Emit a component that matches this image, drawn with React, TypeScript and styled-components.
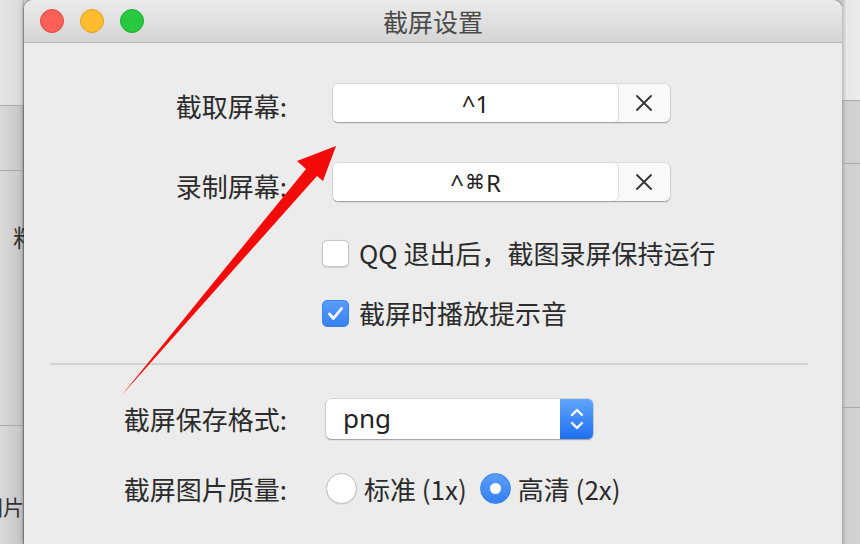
import React from "react";
import styled, { createGlobalStyle } from "styled-components";

const GlobalStyle = createGlobalStyle`
  html, body {
    margin: 0;
    padding: 0;
    background: #d4d4d4;
  }
  body {
    font-family: "Noto Sans CJK SC", "Noto Sans", sans-serif;
  }
`;

const FONT = `"Noto Sans CJK SC", "Noto Sans", sans-serif`;

const Desktop = styled.div`
  position: relative;
  width: 860px;
  height: 544px;
  display: flex;
  overflow: hidden;
`;

const Strip = styled.div<{ $width: number; $head: number; $edge: "left" | "right" }>`
  width: ${(p) => p.$width}px;
  flex: none;
  display: flex;
  flex-direction: column;
  overflow: hidden;
  background: ${(p) =>
    p.$edge === "left"
      ? "linear-gradient(to right, #d9d9d9, #c6c6c6 90%, #9c9c9c)"
      : "linear-gradient(to right, #a8a8a8, #cfcfcf 20%, #d2d2d2)"};

  & > div:first-child {
    height: ${(p) => p.$head}px;
    background: ${(p) =>
      p.$edge === "left"
        ? "linear-gradient(to right, #e6e6e6, #dadada 90%, #b0b0b0)"
        : "linear-gradient(to right, #bdbdbd, #e8e8e8 25%, #ececec)"};
  }
`;

const StripRow = styled.div<{ $h: number; $align?: "left" | "right"; $pad?: number; $ty?: number; $size?: number }>`
  height: ${(p) => p.$h}px;
  flex: none;
  box-sizing: border-box;
  border-top: 1px solid #a9a9a9;
  display: flex;
  justify-content: ${(p) => (p.$align === "right" ? "flex-end" : "flex-start")};
  padding-left: ${(p) => p.$pad ?? 0}px;
  padding-top: ${(p) => p.$ty ?? 0}px;
  font-family: ${FONT};
  font-size: ${(p) => p.$size ?? 24}px;
  line-height: 28px;
  color: #333;
  white-space: nowrap;
`;

const Window = styled.div`
  width: 818px;
  flex: none;
  display: flex;
  flex-direction: column;
  background: #ececec;
  border-radius: 9px 9px 0 0;
  box-shadow: 0 0 0 1px rgba(0, 0, 0, 0.18), 0 0 6px rgba(0, 0, 0, 0.25);
  overflow: hidden;
`;

const TitleBar = styled.div`
  height: 43px;
  flex: none;
  box-sizing: border-box;
  display: flex;
  align-items: center;
  position: relative;
  padding-left: 16px;
  gap: 16px;
  background: linear-gradient(#ebebeb, #d5d5d5);
  border-bottom: 1px solid #b5b5b5;
`;

const Light = styled.span<{ $fill: string; $ring: string }>`
  width: 24px;
  height: 24px;
  border-radius: 50%;
  box-sizing: border-box;
  background: ${(p) => p.$fill};
  border: 1px solid ${(p) => p.$ring};
`;

const Title = styled.div`
  position: absolute;
  left: 0;
  right: 0;
  top: 0;
  bottom: 0;
  display: flex;
  align-items: center;
  justify-content: center;
  font-family: ${FONT};
  font-size: 25px;
  color: #4a4a4a;
  pointer-events: none;
`;

const Body = styled.div`
  display: flex;
  flex-direction: column;
`;

const Row = styled.div<{ $top: number }>`
  display: grid;
  grid-template-columns: 263px 1fr;
  align-items: center;
  margin-top: ${(p) => p.$top}px;
`;

const Label = styled.div<{ $shift?: number }>`
  text-align: right;
  font-family: ${FONT};
  font-size: 26px;
  line-height: 30px;
  color: #2b2b2b;
  padding-top: ${(p) => p.$shift ?? 0}px;
`;

const Control = styled.div<{ $indent: number }>`
  grid-column: 2;
  margin-left: ${(p) => p.$indent}px;
  display: flex;
  align-items: center;
`;

const ShortcutBox = styled.div`
  width: 337px;
  height: 38px;
  display: flex;
  border-radius: 5px;
  background: #f9f9f9;
  box-shadow: 0 0 0 0.5px rgba(0, 0, 0, 0.12), 0 1px 1.5px rgba(0, 0, 0, 0.3);
`;

const ShortcutText = styled.div`
  width: 285px;
  height: 100%;
  display: flex;
  align-items: center;
  justify-content: center;
  background: #fff;
  border-radius: 5px;
  box-shadow: 1px 0 1px rgba(0, 0, 0, 0.12);
  font-family: "Noto Sans", "Noto Sans CJK SC", sans-serif;
  font-size: 24px;
  color: #222;
`;

const CmdGlyph = styled.span`
  font-family: "DejaVu Sans", sans-serif;
  font-size: 20px;
  margin: 0 1px;
`;

const ClearCell = styled.div`
  flex: 1;
  display: flex;
  align-items: center;
  justify-content: center;
`;

const CheckRow = styled.label`
  display: flex;
  align-items: center;
  gap: 10px;
  font-family: ${FONT};
  font-size: 26px;
  line-height: 30px;
  color: #2b2b2b;
`;

const Box = styled.span<{ $on?: boolean }>`
  width: 27px;
  height: 27px;
  box-sizing: border-box;
  border-radius: 5px;
  display: flex;
  align-items: center;
  justify-content: center;
  background: ${(p) => (p.$on ? "linear-gradient(#5a9dfa, #3580f3)" : "#fff")};
  border: 1px solid ${(p) => (p.$on ? "#3a82ee" : "#c4c4c4")};
  box-shadow: ${(p) => (p.$on ? "none" : "0 0.5px 1px rgba(0,0,0,0.12)")};
`;

const Divider = styled.div`
  height: 2px;
  margin: 35px 34px 0 26px;
  background: #d2d2d2;
`;

const Select = styled.div`
  width: 267px;
  height: 40px;
  display: flex;
  border-radius: 5px;
  background: #fff;
  box-shadow: 0 0 0 0.5px rgba(0, 0, 0, 0.18), 0 1px 1.5px rgba(0, 0, 0, 0.28);
  overflow: hidden;
`;

const SelectValue = styled.div`
  flex: 1;
  display: flex;
  align-items: center;
  padding-left: 17px;
  padding-bottom: 3px;
  font-family: "Noto Sans", sans-serif;
  font-size: 26px;
  color: #222;
`;

const Stepper = styled.div`
  width: 33px;
  display: flex;
  align-items: center;
  justify-content: center;
  background: linear-gradient(#62a6fc, #1c6ff1);
`;

const RadioGroup = styled.div`
  display: flex;
  align-items: center;
`;

const RadioItem = styled.label<{ $gap: number }>`
  display: flex;
  align-items: center;
  gap: 7px;
  margin-right: ${(p) => p.$gap}px;
  font-family: ${FONT};
  font-size: 26px;
  line-height: 30px;
  color: #2b2b2b;
`;

const Dot = styled.span<{ $on?: boolean }>`
  width: 31px;
  height: 31px;
  box-sizing: border-box;
  border-radius: 50%;
  display: flex;
  align-items: center;
  justify-content: center;
  background: ${(p) => (p.$on ? "linear-gradient(#5a9dfa, #3580f3)" : "#fff")};
  border: 1px solid ${(p) => (p.$on ? "#3a82ee" : "#c2c2c2")};
  box-shadow: ${(p) => (p.$on ? "none" : "0 0.5px 1px rgba(0,0,0,0.12)")};

  &::after {
    content: "";
    display: ${(p) => (p.$on ? "block" : "none")};
    width: 11px;
    height: 11px;
    border-radius: 50%;
    background: #fff;
  }
`;

const Overlay = styled.svg`
  position: absolute;
  left: 0;
  top: 0;
  pointer-events: none;
`;

const ClearIcon = () => (
  <svg width="18" height="18" viewBox="0 0 18 18">
    <path d="M2 2 L16 16 M16 2 L2 16" stroke="#333" strokeWidth="1.8" strokeLinecap="round" />
  </svg>
);

const CheckMark = () => (
  <svg width="19" height="19" viewBox="0 0 19 19">
    <path d="M3.5 10 L7.5 14.5 L15.5 4.5" fill="none" stroke="#fff" strokeWidth="2.8" strokeLinecap="round" strokeLinejoin="round" />
  </svg>
);

const Chevrons = () => (
  <svg width="16" height="30" viewBox="0 0 16 30">
    <path d="M3 11 L8 6 L13 11 M3 19 L8 24 L13 19" fill="none" stroke="#fff" strokeWidth="2.4" strokeLinecap="round" strokeLinejoin="round" />
  </svg>
);

const Shortcut: React.FC<{ keys: string[] }> = ({ keys }) => (
  <ShortcutBox>
    <ShortcutText>
      {keys.map((k, i) => (k === "⌘" ? <CmdGlyph key={i}>{k}</CmdGlyph> : <span key={i}>{k}</span>))}
    </ShortcutText>
    <ClearCell>
      <ClearIcon />
    </ClearCell>
  </ShortcutBox>
);

export default function App() {
  return (
    <>
      <GlobalStyle />
      <Desktop>
        <Strip $width={24} $head={105} $edge="left">
          <div />
          <StripRow $h={65} />
          <StripRow $h={255} $pad={13} $ty={52}>
            粘贴
          </StripRow>
          <StripRow $h={119} $align="right" $ty={66} $size={21}>
            图片
          </StripRow>
        </Strip>

        <Window>
          <TitleBar>
            <Light $fill="#fe5f57" $ring="#e2463f" />
            <Light $fill="#febc2e" $ring="#dfa023" />
            <Light $fill="#28c840" $ring="#1dad2b" />
            <Title>截屏设置</Title>
          </TitleBar>

          <Body>
            <Row $top={41}>
              <Label $shift={6}>截取屏幕:</Label>
              <Control $indent={46}>
                <Shortcut keys={["^", "1"]} />
              </Control>
            </Row>
            <Row $top={41}>
              <Label $shift={8}>录制屏幕:</Label>
              <Control $indent={46}>
                <Shortcut keys={["^", "⌘", "R"]} />
              </Control>
            </Row>
            <Row $top={37}>
              <Control $indent={35}>
                <CheckRow>
                  <Box />
                  QQ 退出后，截图录屏保持运行
                </CheckRow>
              </Control>
            </Row>
            <Row $top={30}>
              <Control $indent={35}>
                <CheckRow>
                  <Box $on>
                    <CheckMark />
                  </Box>
                  截屏时播放提示音
                </CheckRow>
              </Control>
            </Row>

            <Divider />

            <Row $top={34}>
              <Label>截屏保存格式:</Label>
              <Control $indent={39}>
                <Select>
                  <SelectValue>png</SelectValue>
                  <Stepper>
                    <Chevrons />
                  </Stepper>
                </Select>
              </Control>
            </Row>
            <Row $top={34}>
              <Label>截屏图片质量:</Label>
              <Control $indent={39}>
                <RadioGroup>
                  <RadioItem $gap={13}>
                    <Dot />
                    标准 (1x)
                  </RadioItem>
                  <RadioItem $gap={0}>
                    <Dot $on />
                    高清 (2x)
                  </RadioItem>
                </RadioGroup>
              </Control>
            </Row>
          </Body>
        </Window>

        <Strip $width={18} $head={100} $edge="right">
          <div />
          <StripRow $h={63} />
          <StripRow $h={244} />
          <StripRow $h={137} />
        </Strip>

        <Overlay width="860" height="544" viewBox="0 0 860 544">
          <polygon
            points="121,396 306,169 297,161 336,146 323,181 317,176"
            fill="#f50a0a"
          />
        </Overlay>
      </Desktop>
    </>
  );
}
